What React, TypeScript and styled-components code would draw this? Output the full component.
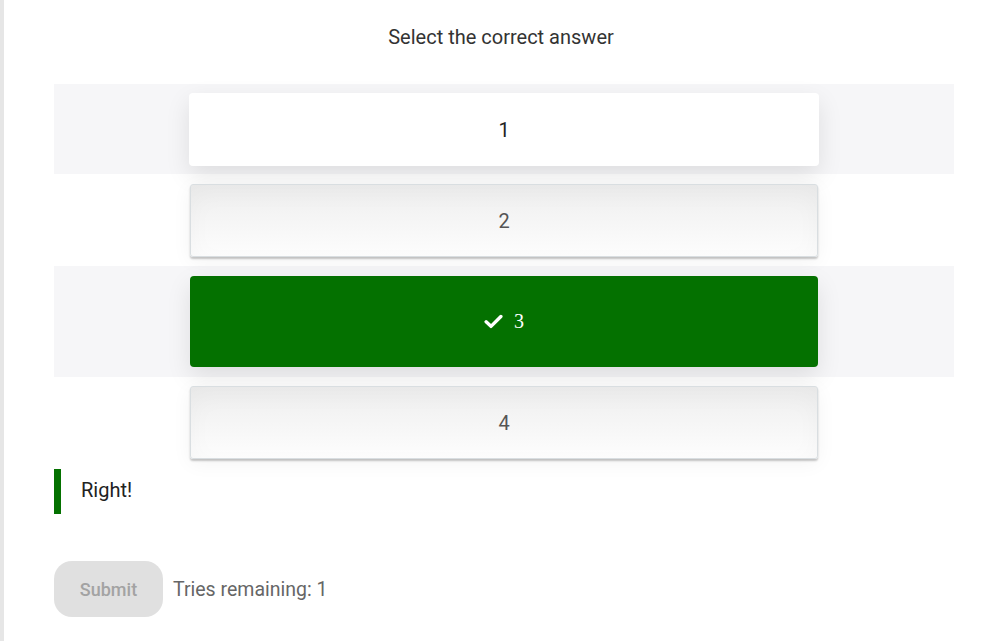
import React from "react";
import styled, { createGlobalStyle, css } from "styled-components";

const Global = createGlobalStyle`
  html, body { margin: 0; padding: 0; background: #fff; }
  body { font-family: Roboto, "Noto Sans", Arial, sans-serif; }
`;

const Page = styled.div`
  min-height: 641px;
  border-left: 4px solid #e6e6e6;
  padding: 0 47px 0 50px;
  box-sizing: border-box;
`;

const Title = styled.h1`
  margin: 0;
  padding: 24px 6px 0 0;
  height: 84px;
  box-sizing: border-box;
  text-align: center;
  font-size: 20px;
  font-weight: 400;
  color: #333;
  line-height: 26px;
`;

const List = styled.div`
  display: flex;
  flex-direction: column;
`;

const Row = styled.div<{ $shade: boolean; $h: number; $pad: number }>`
  display: flex;
  justify-content: center;
  align-items: flex-start;
  height: ${(p) => p.$h}px;
  box-sizing: border-box;
  padding-top: ${(p) => p.$pad}px;
  background: ${(p) => (p.$shade ? "#f6f6f8" : "transparent")};
`;

type Variant = "plain" | "raised" | "correct";

const Card = styled.div<{ $variant: Variant }>`
  box-sizing: border-box;
  display: flex;
  align-items: center;
  justify-content: center;
  gap: 11px;
  font-size: 20px;
  border-radius: 4px;
  position: relative;
  ${(p) =>
    p.$variant === "plain" &&
    css`
      width: 630px;
      height: 73px;
      background: #fff;
      color: #222;
      box-shadow: 0 9px 24px rgba(0, 0, 0, 0.1);
    `}
  ${(p) =>
    p.$variant === "raised" &&
    css`
      width: 628px;
      height: 73px;
      background: linear-gradient(#eeeeee, #fdfdfd);
      border: 1px solid #d9dee1;
      color: #555;
      border-radius: 3px;
      box-shadow: 0 2px 2px rgba(0, 0, 0, 0.22), 0 4px 20px rgba(0, 0, 0, 0.05),
        inset 0 8px 24px rgba(0, 0, 0, 0.03);
    `}
  ${(p) =>
    p.$variant === "correct" &&
    css`
      width: 628px;
      height: 91px;
      background: #047100;
      color: #fff;
      font-family: "Liberation Serif", "Times New Roman", serif;
      box-shadow: 0 9px 24px rgba(0, 0, 0, 0.1);
    `}
`;

const Feedback = styled.div`
  display: flex;
  align-items: center;
  margin-top: 9px;
  height: 45px;
  padding-bottom: 4px;
  box-sizing: border-box;
  border-left: 7px solid #047100;
  padding-left: 20px;
  font-size: 20px;
  color: #222;
`;

const Footer = styled.div`
  display: flex;
  align-items: center;
  gap: 10px;
  margin-top: 47px;
`;

const SubmitButton = styled.button`
  width: 109px;
  height: 56px;
  border: none;
  border-radius: 18px;
  background: #e0e0e0;
  color: #a3a3a3;
  font-family: Roboto, Arial, sans-serif;
  font-size: 18px;
  font-weight: 500;
`;

const Tries = styled.span`
  font-size: 19.5px;
  color: #666;
`;

const Check = () => (
  <svg width="19" height="15" viewBox="0 0 18 14" aria-hidden>
    <path d="M2 7.3 L6.6 11.6 L16 2.2" fill="none" stroke="#fff" strokeWidth="3.2" strokeLinecap="round" strokeLinejoin="round" />
  </svg>
);

const rows: { label: string; variant: Variant; shade: boolean; h: number; pad: number }[] = [
  { label: "1", variant: "plain", shade: true, h: 90, pad: 9 },
  { label: "2", variant: "raised", shade: false, h: 92, pad: 10 },
  { label: "3", variant: "correct", shade: true, h: 111, pad: 10 },
  { label: "4", variant: "raised", shade: false, h: 83, pad: 9 },
];

export default function App() {
  return (
    <>
      <Global />
      <Page>
        <Title>Select the correct answer</Title>
        <List>
          {rows.map((r) => (
            <Row key={r.label} $shade={r.shade} $h={r.h} $pad={r.pad}>
              <Card $variant={r.variant}>
                {r.variant === "correct" && <Check />}
                <span>{r.label}</span>
              </Card>
            </Row>
          ))}
        </List>
        <Feedback>Right!</Feedback>
        <Footer>
          <SubmitButton disabled>Submit</SubmitButton>
          <Tries>Tries remaining: 1</Tries>
        </Footer>
      </Page>
    </>
  );
}
